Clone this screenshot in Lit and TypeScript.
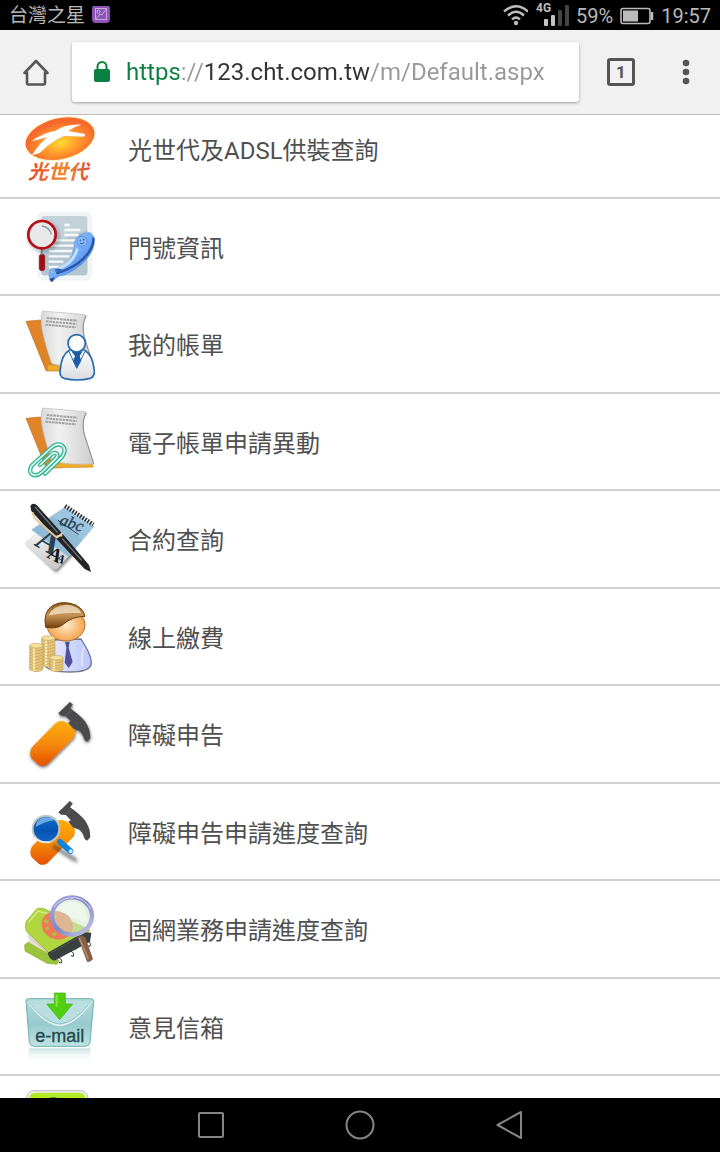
import { LitElement, html, svg, css } from "lit";
import type { SVGTemplateResult } from "lit";
import { customElement, property } from "lit/decorators.js";

interface Art {
  top: number;
  body: SVGTemplateResult;
}

const paper = svg`
  <path d="M48 70 L92 66 L150 218 L108 218 Z" fill="#df8428" stroke="#c26c1c" stroke-width="2"/>
  <path d="M112 200 L246 204 L250 216 L112 219 Z" fill="#efab2c" stroke="#c98a1f" stroke-width="2"/>
  <path d="M98 39 L226 50 Q233 56 226 60 Q214 80 222 118 L250 206 Q180 212 126 197 Q118 180 104 128 Q86 62 98 39Z" fill="url(#sheet)" stroke="#bbb" stroke-width="2"/>
  <path d="M228 54 Q214 80 223 118 L252 208" fill="none" stroke="#888" stroke-width="3"/>
  <g stroke="#a2a2a2" stroke-width="6" stroke-dasharray="8 2"><path d="M110 60l92 8M108 70l92 8M106 80l92 8"/></g>`;

const hammerHead = svg`
  <path d="M146 76 L180 43 L187 50 L179 61 Q207 80 224 100 Q241 124 240 150 L232 160 L225 156 Q220 136 207 127 L190 121 L176 104 L184 100 L168 83 L153 82Z" fill="#4b4b4d" stroke="#434345" stroke-width="2" stroke-linejoin="round"/>
  <path d="M170 82 L183 67" stroke="#777" stroke-width="2"/>`;

const handle = svg`
  <path d="M66 178 L137 106 Q151 94 168 103 L187 116 Q200 128 192 148 L113 228 Q100 238 86 230 L65 211 Q56 196 66 178Z" fill="url(#orange)"/>`;

const coins = (x: number, y: number, n: number) => svg`
  <path d="M${x} ${y} v${n * 9} q20 12 40 0 v-${n * 9}z" fill="#e3c47a" stroke="#b3924a" stroke-width="1.5"/>
  <ellipse cx=${x + 20} cy=${y} rx="20" ry="7" fill="#f5df9f" stroke="#b3924a" stroke-width="1.5"/>
  ${Array.from({ length: n - 1 }, (_, i) => svg`<path d="M${x} ${y + 9 + i * 9} q20 12 40 0" fill="none" stroke="#c3a25a" stroke-width="2"/>`)}
  <path d="M${x + 13} ${y + 9} v${n * 9 - 6}" stroke="#fbeebb" stroke-width="7" stroke-dasharray="6 3"/>`;

const icons: Record<string, Art> = {
  fiber: {
    top: -27,
    body: svg`
      <defs>
        <radialGradient id="sun" cx=".5" cy=".6" r=".5"><stop offset="0" stop-color="#ffdc30"/><stop offset=".5" stop-color="#ff9c2c"/><stop offset="1" stop-color="#f8682c"/></radialGradient>
        <linearGradient id="word" x1="0" x2="1"><stop offset="0" stop-color="#e8452a"/><stop offset=".55" stop-color="#f0892c"/><stop offset="1" stop-color="#d94f35"/></linearGradient>
      </defs>
      <ellipse cx="150" cy="86" rx="108" ry="65" fill="#fff0a8" opacity=".6" transform="rotate(-13 150 86)"/>
      <ellipse cx="150" cy="86" rx="105" ry="61" fill="url(#sun)" transform="rotate(-13 150 86)"/>
      <path d="M66 135 Q90 98 112 82 L64 94 Q98 68 137 62 Q166 42 214 44 Q192 50 174 63 L226 72 L222 80 L162 78 Q126 92 90 128Q78 134 66 135Z" fill="#fff"/>
      <text x="54" y="207" font-size="60" font-weight="700" font-style="italic" fill="url(#word)">光世代</text>`,
  },
  number: {
    top: -3,
    body: svg`
      <defs><linearGradient id="phone" x1="0" x2="1" y1="0" y2="1"><stop offset="0" stop-color="#bedcff"/><stop offset=".55" stop-color="#6ba8f6"/><stop offset="1" stop-color="#2a5cbc"/></linearGradient></defs>
      <rect x="84" y="38" width="160" height="202" rx="15" fill="#f1f5f7" stroke="#e8edf0" stroke-width="2"/>
      <rect x="94" y="48" width="138" height="178" rx="9" fill="#c3d2d9"/>
      <path d="M94 140L232 90V217q0 9-9 9H103q-9 0-9-9z" fill="#b2c5ce"/>
      <g stroke="#f5f9fa" stroke-width="7"><path d="M163 75h16M163 90h48M163 105h42M116 121h90M116 137h76M116 153h70M116 169h62M116 185h44M116 201h30"/></g>
      <ellipse cx="101" cy="110" rx="50" ry="48" fill="#526370" opacity=".3" filter="url(#soft)"/>
      <rect x="88" y="163" width="16" height="49" rx="7" fill="#a30c13" stroke="#7d0a0d" stroke-width="2"/>
      <path d="M95 145v20" stroke="#777" stroke-width="6"/>
      <circle cx="96" cy="104" r="41" fill="#e6e8ea" stroke="#b70d16" stroke-width="8"/>
      <path d="M96 78Q118 81 124 103" fill="none" stroke="#8d959b" stroke-width="4"/>
      <path d="M240 98 Q263 112 247 151 Q225 197 164 225 Q143 226 132 240 Q121 250 119 237 Q113 212 127 207 Q157 207 180 178 Q194 158 193 127 Q203 98 240 98Z" fill="url(#phone)" stroke="#5c94e3" stroke-width="2"/>
      <path d="M250 113 Q252 152 206 188 Q174 210 139 220" fill="none" stroke="#2c55a8" stroke-width="7"/>
      <path d="M202 146 Q190 190 147 205" fill="none" stroke="#c5e0ff" stroke-width="9"/>
      <circle cx="216" cy="124" r="15" fill="#8bbcf8" stroke="#5a90e0" stroke-width="3"/>
      <circle cx="211" cy="121" r="2.5" fill="#275cae"/><circle cx="221" cy="119" r="2.5" fill="#275cae"/><path d="M209 129q8 6 14-2" fill="none" stroke="#275cae" stroke-width="3"/>
      <ellipse cx="146" cy="211" rx="12" ry="5" fill="#3664b5"/>
      <path d="M119 237l15-5-8 15z" fill="#293e90"/>`,
  },
  bill: {
    top: -6,
    body: svg`
      <defs><linearGradient id="coat" x2="0" y2="1"><stop offset="0" stop-color="#fff"/><stop offset="1" stop-color="#d9dbe0"/></linearGradient></defs>
      ${paper}
      <path d="M178 157 Q155 170 151 213 Q146 235 162 241 Q202 251 241 241 Q257 235 252 212 Q247 171 224 157Z" fill="url(#coat)" stroke="#2469ad" stroke-width="5"/>
      <path d="M179 158 L201 211 L224 158Z" fill="#fff"/>
      <path d="M184 160h34l-9 14 5 14-13 23-12-23 6-14z" fill="#1c5ca6"/>
      <path d="M177 160 L200 211 L225 160" fill="none" stroke="#2469ad" stroke-width="3"/>
      <circle cx="200" cy="136" r="26" fill="#fff" stroke="#2469ad" stroke-width="5"/>`,
  },
  ebill: {
    top: -3,
    body: svg`${paper}
      <g fill="none" stroke-linecap="round" stroke-linejoin="round">
        <g stroke="#38b294" stroke-width="13"><path d="M105 236L154 188Q173 164 155 151Q140 143 123 159L65 212Q55 229 66 238Q80 246 96 231L140 188Q146 176 138 174Q130 172 122 180L90 210"/></g>
        <g stroke="#e0fff4" stroke-width="5"><path d="M105 236L154 188Q173 164 155 151Q140 143 123 159L65 212Q55 229 66 238Q80 246 96 231L140 188Q146 176 138 174Q130 172 122 180L90 210"/></g>
      </g>`,
  },
  contract: {
    top: -3,
    body: svg`
      <defs><linearGradient id="card" x2="0" y2="1"><stop offset="0" stop-color="#f9f9f9"/><stop offset="1" stop-color="#c6c6c6"/></linearGradient></defs>
      <path d="M48 155L106 112 197 181 139 242Z" fill="#222" opacity=".6" filter="url(#soft)"/>
      <path d="M50 148L103 105Q110 102 117 107L188 164 191 177 143 230Q136 236 128 231L51 166Q43 158 50 148Z" fill="url(#card)"/>
      <path d="M164 45L253 103 176 194 64 113Z" fill="#9dc5df"/>
      <path d="M64 113L130 73 217 145 176 194Z" fill="#83b2d0" opacity=".5"/>
      <g font-family="Liberation Serif, serif" font-weight="700">
        <text x="146" y="97" font-size="50" font-style="italic" font-weight="400" fill="#263e4e" stroke="#263e4e" transform="rotate(19 146 97)">abc</text>
        <text x="70" y="158" font-size="98" fill="#274052" transform="rotate(30 70 158)">A</text>
        <text x="108" y="195" font-size="58" fill="#18191b" transform="rotate(28 108 195)">A</text>
        <text x="136" y="203" font-size="36" fill="#18191b" transform="rotate(32 136 203)">A</text>
      </g>
      <path d="M144 85L206 128" stroke="#263e4e" stroke-width="3"/>
      <path d="M165 42L250 98" stroke="#333" stroke-width="13" stroke-dasharray="5 4"/>
      <path d="M167 50L246 103" stroke="#ddd" stroke-width="3" stroke-dasharray="3 6"/>
      <path d="M61 42Q68 30 80 39L158 126 237 219 243 240 224 231 139 140 64 57Z" fill="#222326"/>
      <path d="M75 45L143 122M156 139L215 205" stroke="#77797b" stroke-width="4"/>
      <path d="M68 60Q68 72 81 85L137 134 157 130" fill="none" stroke="#e5c797" stroke-width="6"/>
      <path d="M139 138L158 123" stroke="#ead3b0" stroke-width="5"/>`,
  },
  pay: {
    top: -3,
    body: svg`
      <defs><radialGradient id="face"><stop offset="0" stop-color="#ffe9ca"/><stop offset="1" stop-color="#f4a54f"/></radialGradient>
      <linearGradient id="hair" x2="0" y2="1"><stop offset="0" stop-color="#8a5518"/><stop offset=".5" stop-color="#c69457"/><stop offset="1" stop-color="#71400b"/></linearGradient>
      <linearGradient id="shirt" x2="1"><stop offset="0" stop-color="#eff1ff"/><stop offset="1" stop-color="#b9c6fb"/></linearGradient></defs>
      <path d="M124 150Q105 173 103 226Q119 246 180 246Q236 246 243 225Q249 202 213 147Z" fill="url(#shirt)" stroke="#717292" stroke-width="4"/>
      <path d="M222 171q-9 26-5 59" fill="none" stroke="#e9edff" stroke-width="4"/>
      <path d="M165 155h14l-3 18 12 43-12 18-12-16 5-45z" fill="#50509c"/>
      <ellipse cx="168" cy="105" rx="57" ry="48" fill="url(#face)" stroke="#b2712d" stroke-width="3"/>
      <path d="M107 112Q98 67 127 47Q159 29 199 46Q221 58 225 79Q184 79 156 106Q138 117 107 112Z" fill="url(#hair)" stroke="#68400f" stroke-width="3"/>
      <path d="M116 76Q134 40 180 45Q207 50 214 70Q180 66 116 76Z" fill="#fff2da" opacity=".7"/>
      ${coins(95, 144, 9)}${coins(59, 167, 8)}${coins(119, 203, 4)}`,
  },
  fault: {
    top: -6,
    body: svg`
      <defs><filter id="drop" x="-20%" y="-20%" width="150%" height="150%"><feDropShadow dx="1" dy="4" stdDeviation="4" flood-opacity=".65"/></filter></defs>
      <g filter="url(#drop)">${handle}${hammerHead}</g>`,
  },
  progress: {
    top: -9,
    body: svg`
      <defs><linearGradient id="lens" x2="0" y2="1"><stop offset="0" stop-color="#0d73d0"/><stop offset=".55" stop-color="#0753b2"/><stop offset="1" stop-color="#1266c8"/></linearGradient></defs>
      ${handle}${hammerHead}
      <path d="M130 170L198 211 205 229 185 221 128 184Z" fill="#333" opacity=".5" filter="url(#soft)"/>
      <path d="M150 165L181 192" stroke="#1484da" stroke-width="18" stroke-linecap="round"/>
      <circle cx="182" cy="193" r="6" fill="#c9eaff"/>
      <circle cx="108" cy="126" r="40" fill="url(#lens)" stroke="#c4c8c2" stroke-width="6"/>
      <path d="M77 120Q78 97 103 91Q128 89 134 100Q112 100 77 120Z" fill="#a5cdef" opacity=".65"/>
      <path d="M74 152Q91 169 120 165" fill="none" stroke="#eee" stroke-width="4"/>`,
  },
  landline: {
    top: -3,
    body: svg`
      <defs><linearGradient id="ring" x2="1" y2="1"><stop offset="0" stop-color="#aaa8de"/><stop offset=".5" stop-color="#8286c4"/><stop offset="1" stop-color="#c9c9ec"/></linearGradient></defs>
      <path d="M44 188L58 179 125 217 148 236 140 247 111 244 45 207Z" fill="#9cc43a" stroke="#86ab2c" stroke-width="2"/>
      <path d="M52 147L111 211 151 231 124 219 58 182Z" fill="#e8dfd5"/>
      <path d="M55 151L119 218M55 163L112 211" stroke="#c9bbb1" stroke-width="2"/>
      <path d="M49 118L80 81Q88 76 101 80L239 144 199 202 118 214 49 147Q44 130 49 118Z" fill="#b0d640" stroke="#9cc035" stroke-width="3"/>
      <path d="M55 122L83 87 130 99" fill="none" stroke="#d4ed86" stroke-width="4"/>
      <path d="M113 212L222 151 244 152 240 179 133 236Q117 232 113 212Z" fill="#3a3f40"/>
      <path d="M124 212l93-52" stroke="#5a6060" stroke-width="2"/>
      <g fill="none" stroke="#303636" stroke-width="3"><path d="M145 226q14 7 9 17l-7-2M181 206q14 7 9 17l-7-2M231 176q15 7 9 17l-7-2"/></g>
      <ellipse cx="142" cy="130" rx="48" ry="42" fill="#f07a55" transform="rotate(20 142 130)"/>
      <g fill="#b3bb48"><ellipse cx="109" cy="118" rx="7" ry="6"/><ellipse cx="112" cy="139" rx="6" ry="5"/><ellipse cx="133" cy="156" rx="7" ry="6"/><ellipse cx="158" cy="151" rx="7" ry="6"/><ellipse cx="132" cy="105" rx="7" ry="6"/></g>
      <path d="M203 166Q210 158 226 166L249 231Q241 242 231 239Z" fill="#866148"/>
      <path d="M208 168l27 63" stroke="#b38d70" stroke-width="5"/>
      <ellipse cx="186" cy="102" rx="60" ry="56" fill="#cfe8c8" fill-opacity=".55" stroke="url(#ring)" stroke-width="13"/>
      <path d="M139 80Q179 42 222 76L231 119Q197 116 139 80Z" fill="#fff" opacity=".4"/>
      <path d="M132 74Q158 44 197 47Q231 55 241 81" fill="none" stroke="#d8d7fa" stroke-width="3"/>`,
  },
  mail: {
    top: -3,
    body: svg`
      <defs><linearGradient id="env" x2="0" y2="1"><stop offset="0" stop-color="#b0dada"/><stop offset=".55" stop-color="#98cbce"/><stop offset="1" stop-color="#bfe3e3"/></linearGradient>
      <linearGradient id="fade" x2="0" y2="1"><stop offset="0" stop-color="#add3d4" stop-opacity=".65"/><stop offset="1" stop-color="#fff" stop-opacity="0"/></linearGradient></defs>
      <path d="M57 205H241L244 248H54Z" fill="url(#fade)"/>
      <path d="M48 62Q48 56 56 56H242Q252 56 251 64L240 188Q238 199 225 199H73Q60 199 58 187Z" fill="url(#env)" stroke="#6fafb1" stroke-width="3"/>
      <path d="M52 62Q101 133 149 136Q198 133 247 62" fill="#b8dedf" stroke="#f2fbfb" stroke-width="4"/>
      <path d="M51 60Q101 128 149 132Q198 129 247 61" fill="none" stroke="#79afb3" stroke-width="2"/>
      <path d="M133 39H166V72H188L149 119 110 72H133Z" fill="#4fcf10" stroke="#3fae12" stroke-width="2"/>
      <path d="M140 44v36" fill="none" stroke="#8ee534" stroke-width="6"/>
      <text x="149" y="187" text-anchor="middle" font-family="Liberation Sans, sans-serif" font-size="54" fill="#24494c" stroke="#24494c" stroke-width="1">e-mail</text>`,
  },
  more: {
    top: 0,
    body: svg`
      <rect x="50" y="44" width="184" height="190" rx="22" fill="#eee" stroke="#bbb" stroke-width="3"/>
      <rect x="57" y="50" width="170" height="176" rx="18" fill="#b3ec27"/>
      <ellipse cx="130" cy="82" rx="27" ry="18" fill="#356015"/>`,
  },
};

const entries: [string, string][] = [
  ["fiber", "光世代及ADSL供裝查詢"],
  ["number", "門號資訊"],
  ["bill", "我的帳單"],
  ["ebill", "電子帳單申請異動"],
  ["contract", "合約查詢"],
  ["pay", "線上繳費"],
  ["fault", "障礙申告"],
  ["progress", "障礙申告申請進度查詢"],
  ["landline", "固網業務申請進度查詢"],
  ["mail", "意見信箱"],
  ["more", ""],
];

@customElement("status-bar")
class StatusBar extends LitElement {
  static styles = css`
    :host { display: flex; align-items: center; justify-content: space-between; box-sizing: border-box; height: 30px; padding: 2px 9px 0; background: #000; color: #b9b9b9; font: 20px/28px Roboto, "Noto Sans CJK TC", sans-serif; }
    .side { display: flex; align-items: center; gap: 7px; }
    .carrier { font-size: 19px; }
    svg { display: block; }
    .net { font-family: Roboto, sans-serif; font-size: 12px; font-weight: 700; }
  `;
  render() {
    return html`
      <div class="side">
        <span class="carrier">台灣之星</span>
        <svg width="18" height="20" viewBox="0 1 18 20"><rect width="18" height="18" rx="4" fill="#8b54b5"/><g fill="none" stroke="#c9a9de"><rect x="3.5" y="3.5" width="11" height="11"/><circle cx="6.5" cy="6.5" r="1.5"/><path d="M4 14l4-5 2 1 4-6"/></g></svg>
      </div>
      <div class="side">
        <svg width="26" height="26" viewBox="-1 0 26 26" fill="none" stroke="#bdbdbd" stroke-width="2.4"><path d="M1 8.500Q13-2 25 8.500M5 12.500Q13 5 21 12.500M9 16.500Q13 12.500 17 16.500"/><circle cx="13" cy="20" r="2.200" fill="#bdbdbd" stroke="none"/></svg>
        <svg width="34" height="28" viewBox="0 2 34 28"><text class="net" x="1" y="12" fill="#bdbdbd">4G</text><g fill="#c4c4c4"><rect x="9" y="19" width="4" height="7" rx="1"/><rect x="16" y="15" width="4" height="11" rx="1"/></g><g fill="#444"><rect x="23" y="10" width="4" height="16" rx="1"/><rect x="30" y="5" width="4" height="21" rx="1"/></g></svg>
        <span>59%</span>
        <svg width="34" height="18" viewBox="0 0 34 18"><rect x="1" y="1.500" width="29" height="15" rx="2" fill="none" stroke="#bbb" stroke-width="1.600"/><rect x="3" y="3.500" width="15" height="11" fill="#bbb"/><path d="M32 5v8" stroke="#bbb" stroke-width="2.500"/></svg>
        <span>19:57</span>
      </div>`;
  }
}

@customElement("browser-bar")
class BrowserBar extends LitElement {
  static styles = css`
    :host { display: flex; align-items: center; box-sizing: border-box; height: 85px; background: #f1f1f1; border-bottom: 1px solid #bdbdbd; }
    button { display: grid; place-items: center; flex: none; border: 0; padding: 0; height: 60px; background: none; }
    .home { width: 72px; }
    .tabs { width: 60px; margin-left: 12px; }
    .menu { width: 69px; }
    .count { display: grid; place-items: center; box-sizing: border-box; width: 28px; height: 28px; border: 3px solid #555; border-radius: 3px; color: #555; font: 700 17px/20px Roboto, sans-serif; }
    .box { display: flex; align-items: center; flex: 1; min-width: 0; box-sizing: border-box; height: 60px; padding: 0 20px; gap: 14px; background: #fff; border-radius: 3px; box-shadow: 0 1px 3px rgba(0, 0, 0, 0.35); }
    .lock { flex: none; }
    .url { flex: 1; min-width: 0; height: 40px; border: 0; padding: 0; outline: 0; font: 24px/40px Roboto, sans-serif; color: transparent; background: linear-gradient(90deg, #0b8043 53px, #999 53px, #999 78px, #333 78px, #333 243px, #999 243px); -webkit-background-clip: text; background-clip: text; }
  `;
  render() {
    return html`
      <button class="home" aria-label="首頁"><svg width="28" height="30" viewBox="0 0 28 30" fill="none" stroke="#555" stroke-width="2.6" stroke-linejoin="round" stroke-linecap="round"><path d="M5 16H2.500L14 4l11.500 12H23v10q0 1.500-1.500 1.500h-15Q5 27.500 5 26z"/></svg></button>
      <div class="box">
        <svg class="lock" width="20" height="24" viewBox="0 0 20 24"><rect x="2" y="9" width="16" height="13" rx="2" fill="#0b8043"/><path d="M5.500 10V6.500a4.500 4.500 0 0 1 9 0V10" fill="none" stroke="#0b8043" stroke-width="2"/></svg>
        <input class="url" type="text" aria-label="網址" spellcheck="false" value="https://123.cht.com.tw/m/Default.aspx">
      </div>
      <button class="tabs" aria-label="分頁"><span class="count">1</span></button>
      <button class="menu" aria-label="選單"><svg width="8" height="28" viewBox="0 0 8 28" fill="#555"><circle cx="4" cy="5" r="3.300"/><circle cx="4" cy="14" r="3.300"/><circle cx="4" cy="23" r="3.300"/></svg></button>`;
  }
}

@customElement("service-link")
class ServiceLink extends LitElement {
  static styles = css`
    :host { display: block; height: 100%; }
    .link { display: flex; align-items: center; gap: 18px; height: 100%; padding: 0 10px; color: #505050; text-decoration: none; font: 24px/36px Roboto, "Noto Sans CJK TC", sans-serif; }
    .art { flex: none; align-self: flex-start; font-family: "Noto Sans CJK TC", sans-serif; }
    .label { padding-top: 4px; }
  `;
  @property() kind = "";
  @property() label = "";
  render() {
    const art = icons[this.kind];
    return html`<a class="link" href="#${this.kind}">
      <svg class="art" width="100" height="95" viewBox="0 ${art.top} 300 285">
        <defs>
          <linearGradient id="sheet" x1="0" x2="1"><stop offset="0" stop-color="#d8d8d8"/><stop offset=".35" stop-color="#f1f1f1"/><stop offset="1" stop-color="#cdcdcd"/></linearGradient>
          <linearGradient id="orange" x2="0" y2="1"><stop offset="0" stop-color="#ffad08"/><stop offset=".5" stop-color="#f68b08"/><stop offset="1" stop-color="#e65004"/></linearGradient>
          <filter id="soft" x="-20%" y="-20%" width="150%" height="150%"><feGaussianBlur stdDeviation="4"/></filter>
        </defs>
        ${art.body}
      </svg>
      <span class="label">${this.label}</span>
    </a>`;
  }
}

@customElement("app-root")
class AppRoot extends LitElement {
  static styles = css`
    :host { display: flex; flex-direction: column; height: 100vh; background: #fff; }
    .page { flex: 1; min-height: 0; overflow: hidden auto; scrollbar-width: none; }
    .list { list-style: none; margin: -14px 0 0; padding: 0; }
    .row { box-sizing: border-box; height: 98px; border-bottom: 2px solid #d0d0d0; }
    .row:nth-child(even) { height: 97px; }
    .keys { flex: none; display: flex; justify-content: center; height: 54px; background: #000; }
    .key { display: grid; place-items: center; width: 149px; border: 0; padding: 0; background: none; }
  `;
  render() {
    return html`
      <status-bar></status-bar>
      <browser-bar></browser-bar>
      <main class="page">
        <ul class="list">${entries.map(([kind, label]) => html`<li class="row"><service-link kind=${kind} label=${label}></service-link></li>`)}</ul>
      </main>
      <nav class="keys">
        <button class="key" aria-label="最近"><svg width="30" height="30" viewBox="0 0 30 30" fill="none" stroke="#858585" stroke-width="2"><rect x="3" y="3" width="24" height="24" rx="1"/></svg></button>
        <button class="key" aria-label="主畫面"><svg width="30" height="30" viewBox="0 0 30 30" fill="none" stroke="#858585" stroke-width="2"><circle cx="15" cy="15" r="13.500"/></svg></button>
        <button class="key" aria-label="返回"><svg width="30" height="30" viewBox="0 0 30 30" fill="none" stroke="#858585" stroke-width="2" stroke-linejoin="round"><path d="M27 2v26L3.500 15z"/></svg></button>
      </nav>`;
  }
}
